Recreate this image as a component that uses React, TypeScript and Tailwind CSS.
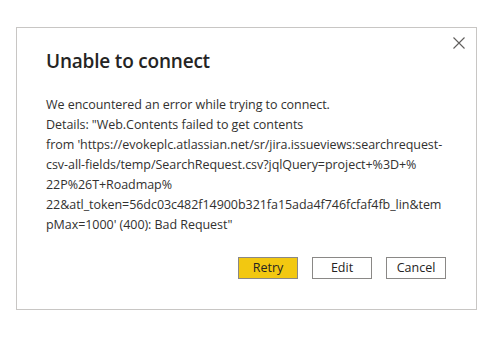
export default function App() {
  const lines = [
    "We encountered an error while trying to connect.",
    'Details: "Web.Contents failed to get contents',
    "from 'https://evokeplc.atlassian.net/sr/jira.issueviews:searchrequest-",
    "csv-all-fields/temp/SearchRequest.csv?jqlQuery=project+%3D+%",
    "22P%26T+Roadmap%",
    "22&atl_token=56dc03c482f14900b321fa15ada4f746fcfaf4fb_lin&tem",
    "pMax=1000' (400): Bad Request\"",
  ];

  return (
    <div
      className="w-[502px] h-[338px] bg-white pt-[27px] pl-[16px]"
      style={{ fontFamily: '"Open Sans", "Liberation Sans", sans-serif' }}
    >
      <div className="relative w-[461px] h-[283px] border border-[#c8c6c4] bg-white pl-[29px] pr-[30px]">
        <button className="absolute right-[10px] top-[8px] w-[14px] h-[14px] flex items-center justify-center text-[#605e5c]">
          <svg width="12" height="12" viewBox="0 0 12 12" fill="none" stroke="currentColor" strokeWidth="1.1">
            <path d="M0.5 0.5 L11.5 11.5 M11.5 0.5 L0.5 11.5" />
          </svg>
        </button>

        <h2 className="pt-[19px] text-[19px] leading-[28px] font-semibold text-[#252423] tracking-[-0.2px]">
          Unable to connect
        </h2>

        <div className="mt-[20px] text-[12.5px] leading-[20px] text-[#323130] tracking-[-0.05px]">
          {lines.map((l, i) => (
            <div key={i} className="whitespace-nowrap">
              {l}
            </div>
          ))}
        </div>

        <div className="mt-[22px] flex justify-end gap-[14px]">
          <button className="w-[60px] h-[22px] border border-[#8a8886] bg-[#f2c811] text-[12.5px] text-[#252423]">
            Retry
          </button>
          <button className="w-[60px] h-[22px] border border-[#8a8886] bg-white text-[12.5px] text-[#252423]">
            Edit
          </button>
          <button className="w-[60px] h-[22px] border border-[#8a8886] bg-white text-[12.5px] text-[#252423]">
            Cancel
          </button>
        </div>
      </div>
    </div>
  );
}
